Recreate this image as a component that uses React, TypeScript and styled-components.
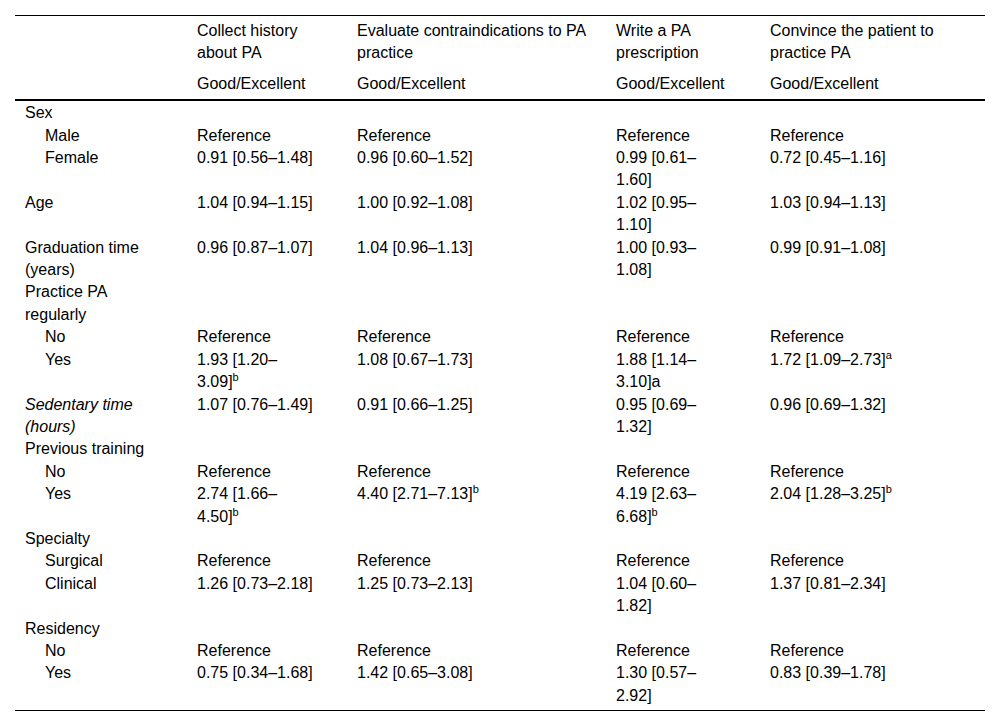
import React from 'react';
import styled, { createGlobalStyle } from 'styled-components';

const GlobalStyle = createGlobalStyle`
  body {
    margin: 0;
    background: #fff;
  }
`;

// column widths and right padding, tuned so cells wrap where the source does
const COL_WIDTHS = [172, 160, 259, 154, 225];
const COL_PAD_RIGHT = [30, 32, 10, 32, 25];

const Page = styled.div`
  padding: 15px;
  font-family: 'Liberation Sans', Arial, Helvetica, sans-serif;
  font-size: 16px;
  color: #000;
`;

const Table = styled.table`
  width: 970px;
  table-layout: fixed;
  border-collapse: collapse;
  border-top: 1px solid #000;
  border-bottom: 1px solid #000;
  line-height: 22.4px;
`;

const HeadRow = styled.tr<{ $last?: boolean }>`
  border-bottom: ${(p) => (p.$last ? '2px solid #000' : 'none')};
`;

const HeadCell = styled.th<{ $col: number }>`
  padding: 4px ${(p) => COL_PAD_RIGHT[p.$col]}px 4px 10px;
  text-align: left;
  vertical-align: top;
  font-weight: normal;
`;

const BodyRow = styled.tr`
  &:first-child td {
    padding-top: 1px;
  }
  &:last-child td {
    padding-bottom: 3px;
  }
`;

const Cell = styled.td<{ $col: number; $indent?: boolean; $italic?: boolean }>`
  padding: 0 ${(p) => COL_PAD_RIGHT[p.$col]}px 0 ${(p) => (p.$indent ? 30 : 10)}px;
  text-align: left;
  vertical-align: top;
  font-style: ${(p) => (p.$italic ? 'italic' : 'normal')};
`;

const NoWrap = styled.span`
  white-space: nowrap;
`;

const Sup = styled.sup`
  display: inline-block;
  font-size: 11px;
  line-height: 11px;
  vertical-align: top;
  margin-top: 1px;
`;

// value with a footnote mark; the mark stays glued to the closing bound
const Marked: React.FC<{ value: string; mark: string }> = ({ value, mark }) => {
  const cut = value.lastIndexOf('–') + 1;
  return (
    <>
      {value.slice(0, cut)}
      <NoWrap>
        {value.slice(cut)}
        <Sup>{mark}</Sup>
      </NoWrap>
    </>
  );
};

type Row = {
  label: string;
  indent?: boolean;
  italic?: boolean;
  values?: React.ReactNode[];
};

const REF = ['Reference', 'Reference', 'Reference', 'Reference'];

const rows: Row[] = [
  { label: 'Sex' },
  { label: 'Male', indent: true, values: REF },
  {
    label: 'Female',
    indent: true,
    values: ['0.91 [0.56–1.48]', '0.96 [0.60–1.52]', '0.99 [0.61–1.60]', '0.72 [0.45–1.16]'],
  },
  {
    label: 'Age',
    values: ['1.04 [0.94–1.15]', '1.00 [0.92–1.08]', '1.02 [0.95–1.10]', '1.03 [0.94–1.13]'],
  },
  {
    label: 'Graduation time (years)',
    values: ['0.96 [0.87–1.07]', '1.04 [0.96–1.13]', '1.00 [0.93–1.08]', '0.99 [0.91–1.08]'],
  },
  { label: 'Practice PA regularly' },
  { label: 'No', indent: true, values: REF },
  {
    label: 'Yes',
    indent: true,
    values: [
      <Marked value="1.93 [1.20–3.09]" mark="b" />,
      '1.08 [0.67–1.73]',
      '1.88 [1.14–3.10]a',
      <Marked value="1.72 [1.09–2.73]" mark="a" />,
    ],
  },
  {
    label: 'Sedentary time (hours)',
    italic: true,
    values: ['1.07 [0.76–1.49]', '0.91 [0.66–1.25]', '0.95 [0.69–1.32]', '0.96 [0.69–1.32]'],
  },
  { label: 'Previous training' },
  { label: 'No', indent: true, values: REF },
  {
    label: 'Yes',
    indent: true,
    values: [
      <Marked value="2.74 [1.66–4.50]" mark="b" />,
      <Marked value="4.40 [2.71–7.13]" mark="b" />,
      <Marked value="4.19 [2.63–6.68]" mark="b" />,
      <Marked value="2.04 [1.28–3.25]" mark="b" />,
    ],
  },
  { label: 'Specialty' },
  { label: 'Surgical', indent: true, values: REF },
  {
    label: 'Clinical',
    indent: true,
    values: ['1.26 [0.73–2.18]', '1.25 [0.73–2.13]', '1.04 [0.60–1.82]', '1.37 [0.81–2.34]'],
  },
  { label: 'Residency' },
  { label: 'No', indent: true, values: REF },
  {
    label: 'Yes',
    indent: true,
    values: ['0.75 [0.34–1.68]', '1.42 [0.65–3.08]', '1.30 [0.57–2.92]', '0.83 [0.39–1.78]'],
  },
];

const headings = [
  'Collect history about PA',
  'Evaluate contraindications to PA practice',
  'Write a PA prescription',
  'Convince the patient to practice PA',
];

const App: React.FC = () => {
  return (
    <Page>
      <GlobalStyle />
      <Table>
        <colgroup>
          {COL_WIDTHS.map((w, i) => (
            <col key={i} style={{ width: w }} />
          ))}
        </colgroup>
        <thead>
          <HeadRow>
            <HeadCell $col={0} />
            {headings.map((h, i) => (
              <HeadCell key={h} $col={i + 1}>
                {h}
              </HeadCell>
            ))}
          </HeadRow>
          <HeadRow $last>
            <HeadCell $col={0} />
            {headings.map((h, i) => (
              <HeadCell key={h} $col={i + 1}>
                Good/Excellent
              </HeadCell>
            ))}
          </HeadRow>
        </thead>
        <tbody>
          {rows.map((row, r) => (
            <BodyRow key={r}>
              <Cell $col={0} $indent={row.indent} $italic={row.italic}>
                {row.label}
              </Cell>
              {[0, 1, 2, 3].map((c) => (
                <Cell key={c} $col={c + 1}>
                  {row.values ? row.values[c] : null}
                </Cell>
              ))}
            </BodyRow>
          ))}
        </tbody>
      </Table>
    </Page>
  );
};

export default App;
